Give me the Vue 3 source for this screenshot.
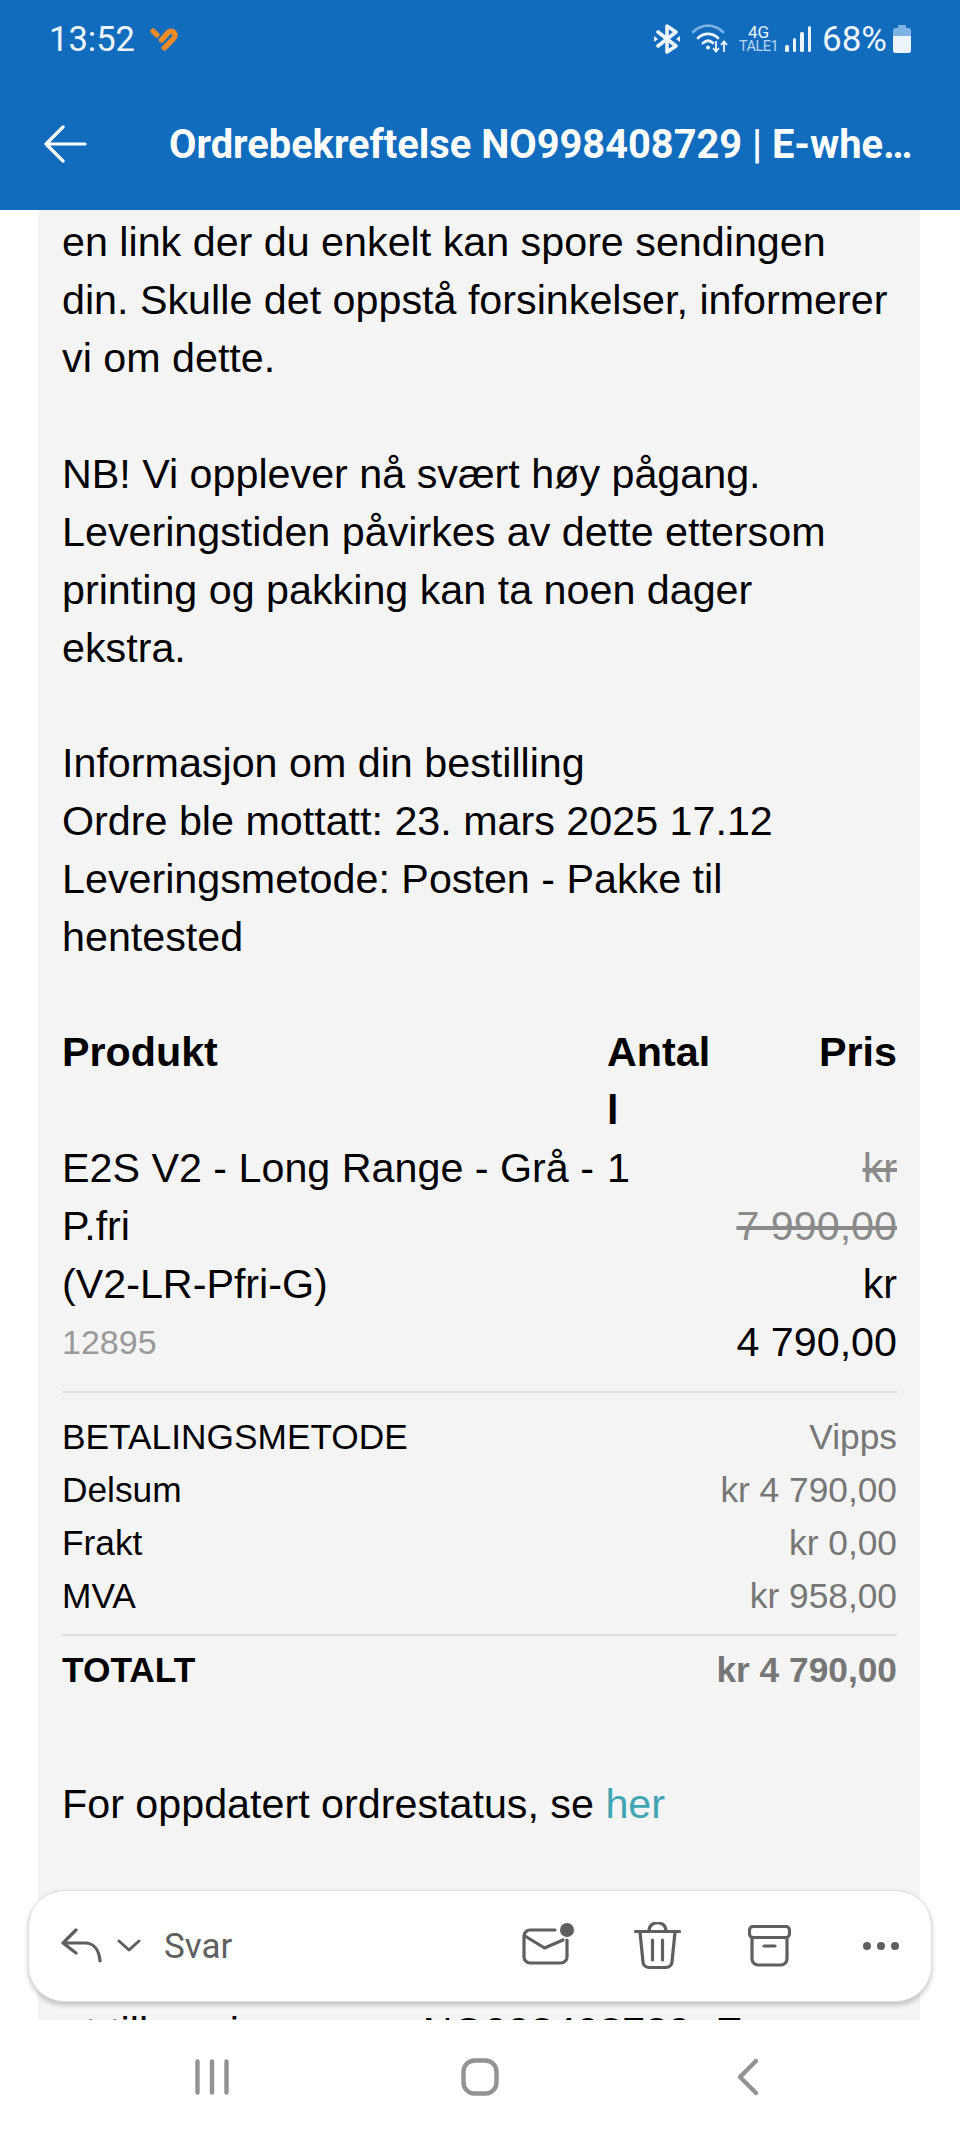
<template>
  <div class="phone">
    <header class="top">
      <div class="status">
        <span class="time">13:52</span>
        <svg class="heart" width="28" height="24" viewBox="0 0 82 70">
          <path d="M9 12l11 11" fill="none" stroke="#f08a24" stroke-width="16" stroke-linecap="round"/>
          <path d="M34 38 52 17c6-7 15-6 19 0 4 6 2 13-4 19L42 61" fill="none" stroke="#f08a24" stroke-width="16" stroke-linecap="round"/>
        </svg>
        <span class="spacer"></span>
        <svg class="ic-bt" width="26" height="30" viewBox="0 0 26 30">
          <path d="M4 8l18 14-9 6V2l9 6L4 22" fill="none" stroke="#eef4fb" stroke-width="3.600" stroke-linejoin="round" stroke-linecap="round"/>
          <path d="M0 12l4 3-4 3zM26 12l-4 3 4 3z" fill="#eef4fb"/>
        </svg>
        <svg class="ic-wifi" width="36" height="30" viewBox="0 0 36 30">
          <path d="M1 8c9-8.500 21-8.500 30 0" fill="none" stroke="#7fb2e2" stroke-width="2.800" stroke-linecap="round"/>
          <path d="M6 14c6-5.500 14-5.500 20 0M11 19c3.500-3 7-3 10 0" fill="none" stroke="#eef4fb" stroke-width="2.800" stroke-linecap="round"/>
          <circle cx="16" cy="23.500" r="2" fill="#eef4fb"/>
          <path d="M24 17v10M21 24l3 3.500 3-3.500M32 28V18M29 21l3-3.500 3 3.500" fill="none" stroke="#eef4fb" stroke-width="1.800"/>
        </svg>
        <span class="net"><b>4G</b><i>TALE1</i></span>
        <span class="bars"><em class="b1"></em><em class="b2"></em><em class="b3"></em><em class="b4"></em></span>
        <span class="pct">68%</span>
        <span class="batt"><span class="batt-fill"></span></span>
      </div>
      <div class="appbar">
        <svg class="back" width="44" height="38" viewBox="0 0 44 38">
          <path d="M42 19H3M20 2 3 19l17 17" fill="none" stroke="#fff" stroke-width="3.200" stroke-linecap="round" stroke-linejoin="round"/>
        </svg>
        <h1 class="title">Ordrebekreftelse NO998408729 | E-wheels</h1>
      </div>
    </header>

    <main class="scroll">
      <article class="mail">
        <p>en link der du enkelt kan spore sendingen din. Skulle det oppstå forsinkelser, informerer vi om dette.</p>
        <p class="busy">NB! Vi opplever nå svært høy pågang. Leveringstiden påvirkes av dette ettersom printing og pakking kan ta noen dager<br>ekstra.</p>
        <p>Informasjon om din bestilling<br>Ordre ble mottatt: 23. mars 2025 17.12<br>Leveringsmetode: Posten - Pakke til hentested</p>

        <div class="order">
          <div class="cell head">Produkt</div>
          <div class="cell head qty">Antall</div>
          <div class="cell head right">Pris</div>
          <div class="cell">
            E2S V2 - Long Range - Grå - P.fri<br>(V2-LR-Pfri-G)
            <div class="sku">12895</div>
          </div>
          <div class="cell qty">1</div>
          <div class="cell right">
            <s class="old">kr 7&nbsp;990,00</s><br>kr 4&nbsp;790,00
          </div>
        </div>

        <div class="rule first"></div>
        <div class="sum" v-for="row in summary" :key="row.label">
          <span>{{ row.label }}</span><span class="val">{{ row.value }}</span>
        </div>
        <div class="rule second"></div>
        <div class="sum total">
          <span>TOTALT</span><span class="val">kr 4 790,00</span>
        </div>

        <p class="status-line">For oppdatert ordrestatus, se <a href="#" class="link">her</a></p>
        <p class="cut">at tillegg i oppgave NO998408729. E</p>
      </article>
    </main>

    <div class="actions">
      <svg class="a-reply" width="44" height="36" viewBox="0 0 44 36">
        <path d="M15 2 2 15l13 10M2 15h22c8 0 14 6 15 18" fill="none" stroke="#5f5f5f" stroke-width="3.200" stroke-linecap="round" stroke-linejoin="round"/>
      </svg>
      <svg class="a-chev" width="24" height="14" viewBox="0 0 24 14">
        <path d="M2 2l10 9 10-9" fill="none" stroke="#5f5f5f" stroke-width="3" stroke-linecap="round" stroke-linejoin="round"/>
      </svg>
      <span class="svar">Svar</span>
      <span class="spacer"></span>
      <svg class="a-mail" width="52" height="43" viewBox="0 0 52 43">
        <path d="M33 7H8a6 6 0 0 0-6 6v21a6 6 0 0 0 6 6h31a6 6 0 0 0 6-6V17" fill="none" stroke="#5f5f5f" stroke-width="3.200" stroke-linecap="round"/>
        <path d="M3 13l19.500 12L41 17" fill="none" stroke="#5f5f5f" stroke-width="3.200" stroke-linecap="round" stroke-linejoin="round"/>
        <circle cx="45" cy="7" r="7" fill="#5f5f5f"/>
      </svg>
      <svg class="a-trash" width="47" height="48" viewBox="0 0 47 48">
        <path d="M1.500 9.500h44M6 10l3 30a6 6 0 0 0 6 5.500h17a6 6 0 0 0 6-5.500l3-30M15 9c0-11 17-11 17 0M18.500 18v20M28.500 18v20" fill="none" stroke="#5f5f5f" stroke-width="3.200" stroke-linecap="round"/>
      </svg>
      <svg class="a-box" width="43" height="42" viewBox="0 0 43 42">
        <rect x="1.500" y="1.500" width="40" height="11" rx="3.500" fill="none" stroke="#5f5f5f" stroke-width="3.200"/>
        <path d="M4 13v21a6 6 0 0 0 6 6h23a6 6 0 0 0 6-6V13M16 21h11" fill="none" stroke="#5f5f5f" stroke-width="3.200" stroke-linecap="round"/>
      </svg>
      <span class="dots"><i></i><i></i><i></i></span>
    </div>

    <nav class="nav">
      <svg width="36" height="36" viewBox="0 0 36 36">
        <path d="M3.500 2.500v31M18 2.500v31M32.500 2.500v31" fill="none" stroke="#939393" stroke-width="4.400" stroke-linecap="round"/>
      </svg>
      <svg width="38" height="38" viewBox="0 0 38 38">
        <rect x="2.500" y="2.500" width="33" height="33" rx="11" fill="none" stroke="#939393" stroke-width="4.400"/>
      </svg>
      <svg width="24" height="38" viewBox="0 0 24 38">
        <path d="M20 3 4 19l16 16" fill="none" stroke="#939393" stroke-width="4.400" stroke-linecap="round" stroke-linejoin="round"/>
      </svg>
    </nav>
  </div>
</template>

<script setup>
const summary = [
  { label: 'BETALINGSMETODE', value: 'Vipps' },
  { label: 'Delsum', value: 'kr 4 790,00' },
  { label: 'Frakt', value: 'kr 0,00' },
  { label: 'MVA', value: 'kr 958,00' },
]
</script>

<style>
html, body { margin: 0; background: #fff; }
</style>

<style scoped>
.phone {
  width: 960px; height: 2133px; position: relative; overflow: hidden;
  display: flex; flex-direction: column; background: #fff;
  font-family: "Liberation Sans", Arial, sans-serif; color: #000;
}
.top { height: 210px; flex: none; background: #116cbd; display: flex; flex-direction: column; }
.status {
  height: 78px; display: flex; align-items: center; padding: 0 49px;
  color: #eef4fb; font-family: Roboto, sans-serif;
}
.time { font-size: 34.500px; line-height: 1; }
.heart { margin-left: 15px; }
.spacer { flex: 1; }
.ic-bt { margin-right: 12px; }
.ic-wifi { margin-right: 12px; }
.net { display: flex; flex-direction: column; align-items: center; width: 37px; line-height: 14px; margin-right: 8px; }
.net b { font-size: 17px; font-weight: 400; }
.net i { font-size: 14.500px; font-style: normal; color: #bcd6f0; margin-top: 1px; letter-spacing: -0.5px; }
.bars { display: flex; align-items: flex-end; gap: 4px; height: 26px; margin-right: 11px; }
.bars em { width: 3.500px; background: #eef4fb; border-radius: 1.500px; display: block; }
.b1 { height: 7px; } .b2 { height: 14px; } .b3 { height: 20px; } .b4 { height: 26px; }
.pct { font-size: 35px; line-height: 1; }
.batt {
  width: 18px; height: 25px; margin-left: 6px; position: relative; border-radius: 3px;
  background: #7fb2e2; display: block; margin-top: 3px;
}
.batt::before { content: ""; position: absolute; top: -3px; left: 5px; width: 8px; height: 3px; background: #7fb2e2; border-radius: 1px 1px 0 0; }
.batt-fill { position: absolute; left: 0; right: 0; bottom: 0; height: 17px; background: #eef4fb; border-radius: 0 0 3px 3px; }

.appbar { flex: 1; display: flex; align-items: center; padding: 0 40px 0 43px; min-width: 0; }
.back { flex: none; margin-right: 82px; }
.title {
  margin: 0; font-family: Roboto, sans-serif; font-weight: 700; font-size: 39.800px; color: #fff;
  white-space: nowrap; overflow: hidden; text-overflow: ellipsis; min-width: 0;
}

.scroll { height: 1810px; flex: none; overflow: hidden; padding: 0 40px 0 38px; }
.mail { background: #f4f4f4; padding: 3px 23px 40px 24px; font-size: 41.250px; line-height: 58px; }
.mail p { margin: 0 0 58px; }
.mail .busy { margin-bottom: 57px; }

.order { display: grid; grid-template-columns: 545px 110px 1fr; margin-top: -1px; }
.cell { min-width: 0; }
.head { font-weight: 700; }
.qty { word-break: break-all; }
.right { text-align: right; }
.sku { font-size: 34px; color: #999; }
.old { color: #8a8a8a; }

.rule { height: 2px; background: #dedede; }
.rule.first { margin: 20px 0 17px; }
.rule.second { margin: 12px 0 7px; }
.sum { display: flex; justify-content: space-between; font-size: 35.300px; line-height: 53px; }
.val { color: #767676; }
.total { font-weight: 700; }

.mail .status-line { margin: 79px 0 170px; }
.link { color: #3fa5b5; text-decoration: none; }
.mail .cut { margin: 0; word-spacing: 1.300px; }

.actions {
  position: absolute; left: 28px; top: 1890px; width: 904px; height: 112px; box-sizing: border-box;
  background: #fff; border: 1px solid #dcdcdc; border-radius: 36px;
  box-shadow: 0 3px 5px rgba(0, 0, 0, 0.22);
  display: flex; align-items: center; padding: 0 32px; color: #5f5f5f;
}
.a-chev { margin-left: 12px; }
.svar { font-family: Roboto, sans-serif; font-size: 35px; margin-left: 23px; }
.a-mail { margin-right: 60px; margin-top: -4px; }
.a-trash { margin-right: 67px; }
.a-box { margin-right: 72px; }
.dots { display: flex; gap: 6px; }
.dots i { width: 8px; height: 8px; border-radius: 50%; background: #5f5f5f; display: block; }

.nav {
  flex: 1; background: #fff; display: grid; grid-template-columns: repeat(3, 268px);
  justify-content: center; justify-items: center; align-items: center;
}
</style>
